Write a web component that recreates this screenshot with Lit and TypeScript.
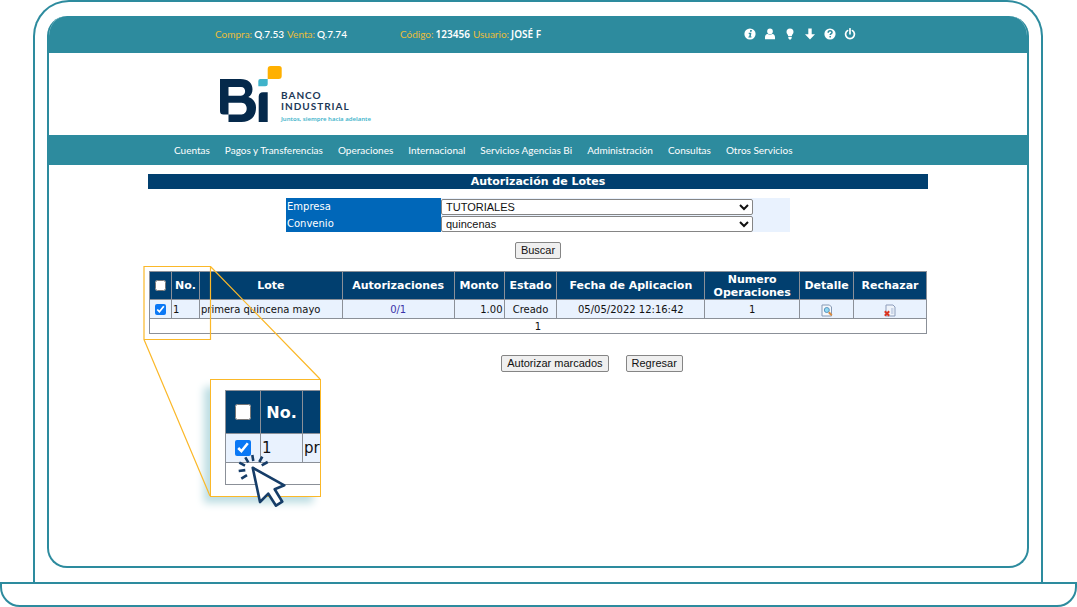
import { LitElement, html, svg, css } from "lit";
import { customElement, state } from "lit/decorators.js";

interface Column {
  title: string;
  width: number;
}

const COLUMNS: Column[] = [
  { title: "", width: 22 },
  { title: "No.", width: 28 },
  { title: "Lote", width: 143 },
  { title: "Autorizaciones", width: 112 },
  { title: "Monto", width: 50 },
  { title: "Estado", width: 53 },
  { title: "Fecha de Aplicacion", width: 148 },
  { title: "Numero Operaciones", width: 95 },
  { title: "Detalle", width: 54 },
  { title: "Rechazar", width: 73 },
];
const TOTAL = COLUMNS.reduce((sum, c) => sum + c.width, 0);

const MENU = [
  "Cuentas",
  "Pagos y Transferencias",
  "Operaciones",
  "Internacional",
  "Servicios Agencias Bi",
  "Administración",
  "Consultas",
  "Otros Servicios",
];

const TOOLS = [
  {
    label: "Información",
    shape: svg`<circle cx="6" cy="6" r="5.6" fill="#fff"/><path d="M6.2 2.1h1.7L7.6 3.7H5.9zM4.7 4.8h2.7L6.8 8.4h.8l-.2 1.2H4.3l.2-1.2h.7l.4-2.4h-.9z" fill="#2d8b9e"/>`,
  },
  {
    label: "Usuario",
    shape: svg`<circle cx="6" cy="3.4" r="2.8" fill="#fff"/><path d="M1 11.2V9.3C1 7.4 2 6.3 3.6 6.1c1.4 1 3.4 1 4.8 0C10 6.3 11 7.4 11 9.3v1.9z" fill="#fff"/>`,
  },
  {
    label: "Ideas",
    shape: svg`<path d="M6 .4a3.5 3.5 0 0 1 3.5 3.5c0 1.7-1.5 2.5-1.7 4.2H4.2C4 6.4 2.5 5.6 2.5 3.9A3.5 3.5 0 0 1 6 .4zM4.3 8.8h3.4V10l-.8 1.5H5.1L4.3 10z" fill="#fff"/>`,
  },
  {
    label: "Descargar",
    shape: svg`<path d="M4.3.5h3.4v5.7h3.3L6 11.6 1 6.2h3.3z" fill="#fff"/>`,
  },
  {
    label: "Ayuda",
    shape: svg`<circle cx="6" cy="6" r="5.6" fill="#fff"/><path d="M4.2 4.7C4.2 2.3 8 2.3 8 4.4 8 5.7 6.2 5.5 6.2 7.1M6.2 8v1.5" fill="none" stroke="#2d8b9e" stroke-width="1.5"/>`,
  },
  {
    label: "Salir",
    shape: svg`<path d="M3.5 2.6a4.4 4.4 0 1 0 5 0M6 .8v5" fill="none" stroke="#fff" stroke-width="1.7" stroke-linecap="round"/>`,
  },
];

@customElement("app-root")
export class AppRoot extends LitElement {
  @state() private checked = true;

  static styles = css`
    :host {
      display: flex;
      flex-direction: column;
      min-height: 100vh;
      background: #fff;
      color: #111;
      font-family: "DejaVu Sans", Verdana, sans-serif;
      font-size: 10px;
      --teal: #2d8b9e;
      --navy: #013f6f;
      --pale: #e9f2fe;
      --amber: #fbb829;
    }
    * {
      box-sizing: border-box;
    }
    .lid {
      flex: 1;
      display: flex;
      margin: 0 34px 0 33px;
      padding: 14px 12px;
      border: 2px solid var(--teal);
      border-bottom: 0;
      border-radius: 36px 36px 0 0;
    }
    .screen {
      flex: 1;
      min-width: 0;
      border: 2px solid var(--teal);
      border-top: 0;
      border-radius: 20px;
      overflow: hidden;
    }
    .base {
      height: 25px;
      border: 2px solid var(--teal);
      border-radius: 0 0 20px 20px;
    }
    .wrap {
      max-width: 780px;
      margin: 0 auto;
    }
    .topbar,
    .menu {
      background: var(--teal);
      color: #fff;
      font-family: Lato, "Open Sans", sans-serif;
    }
    .topbar .wrap {
      display: flex;
      align-items: center;
      height: 37px;
      padding: 0 72px 1px 67px;
    }
    .rates {
      width: 185px;
    }
    .facts {
      display: flex;
      gap: 2px;
      margin: 0;
    }
    .facts dt {
      color: #e9bd3a;
    }
    .facts dd {
      margin: 0 1px 0 0;
      font-weight: 600;
    }
    .user dd {
      font-family: "Noto Sans", "Open Sans", sans-serif;
    }
    .facts dt,
    .facts dd {
      line-height: 14px;
    }
    .tools {
      display: flex;
      gap: 8px;
      margin-left: auto;
    }
    .tool {
      width: 12px;
      height: 12px;
      padding: 0;
      border: 0;
      background: none;
    }
    .tool svg {
      display: block;
    }
    .brandbar .wrap {
      display: flex;
      height: 82px;
      padding: 12px 71px 0;
    }
    .logo {
      overflow: visible;
    }
    .wordmark {
      padding-top: 25px;
      font-family: Lato, sans-serif;
      font-size: 10px;
      font-weight: 700;
      line-height: 11px;
      letter-spacing: 1px;
      color: #1c3857;
    }
    .wordmark p {
      margin: 0;
    }
    .wordmark .slogan {
      padding-top: 2px;
      font-family: "Noto Sans", sans-serif;
      font-size: 6px;
      font-weight: 600;
      letter-spacing: 0;
      color: #42b4cb;
    }
    .menu .wrap {
      display: flex;
      align-items: center;
      gap: 15px;
      height: 30px;
      padding-left: 26px;
    }
    .menu a {
      color: #fff;
      text-decoration: none;
      white-space: nowrap;
    }
    .content {
      display: flex;
      flex-direction: column;
      padding-top: 9px;
    }
    h1 {
      margin: 0 0 9px;
      padding-top: 1px;
      background: var(--navy);
      color: #fff;
      font-size: 11px;
      line-height: 14px;
      text-align: center;
    }
    .filter {
      display: grid;
      grid-template-columns: 155px 313px 36px;
      align-self: center;
      background: linear-gradient(90deg, #0067b9 155px, var(--pale) 155px);
    }
    .filter label {
      grid-column: 1;
      padding: 1px 0 0 1px;
      color: #fff;
      line-height: 16px;
    }
    .filter select {
      grid-column: 2;
      height: 16px;
      margin: 1px 1px 0 0;
      padding: 0;
      border: 1px solid #858585;
      border-radius: 2px;
      background: #fff;
      color: #111;
      font: 11px "Liberation Sans", Arial, sans-serif;
    }
    .btn {
      height: 17px;
      padding: 0 5px;
      border: 1px solid #858585;
      border-radius: 2px;
      background: #efefef;
      color: #111;
      font: 11px/15px "Liberation Sans", Arial, sans-serif;
    }
    .search {
      align-self: center;
      margin: 10px 0 12px;
    }
    .actions {
      display: flex;
      justify-content: center;
      gap: 17px;
      margin-top: 21px;
      padding-left: 108px;
    }
    .batch {
      position: relative;
      padding: 0 1px;
    }
    table {
      width: 100%;
      table-layout: fixed;
      border-collapse: collapse;
    }
    th,
    td {
      padding: 0 1px;
      border: 1px solid #8b9098;
      text-align: center;
      white-space: nowrap;
    }
    th {
      background: var(--navy);
      color: #fff;
      font-size: 11px;
      line-height: 13px;
    }
    .batch th {
      height: 28px;
    }
    .batch .wide {
      white-space: normal;
    }
    .batch .row td {
      height: 19px;
      background: var(--pale);
    }
    .batch .pager td {
      height: 15px;
      line-height: 13px;
    }
    td.start {
      text-align: left;
    }
    td.end {
      text-align: right;
    }
    td a {
      color: #3a33a8;
      text-decoration: none;
    }
    input {
      display: block;
      width: 11px;
      height: 11px;
      margin: 0 auto;
      accent-color: #0a78f5;
    }
    .icon {
      display: block;
      width: 12px;
      height: 13px;
      margin: 2px auto 0;
      padding: 0;
      border: 0;
      background: none;
    }
    .guide {
      position: absolute;
      left: -6px;
      top: -6px;
      pointer-events: none;
    }
    .lens {
      position: absolute;
      left: 62px;
      top: 108px;
      width: 111px;
      height: 118px;
      padding: 10px 0 0 14px;
      border: 1px solid var(--amber);
      background: #fff;
      box-shadow: -7px 7px 8px -1px #bcdde2;
    }
    .crop {
      overflow: hidden;
    }
    .lens table {
      width: 160px;
    }
    .lens .mark {
      width: 35px;
    }
    .lens .num {
      width: 42px;
    }
    .lens th {
      height: 43px;
      font-size: 16px;
    }
    .lens td {
      font-size: 15px;
      text-align: left;
    }
    .lens .row td {
      height: 29px;
      background: var(--pale);
    }
    .lens .blank td {
      height: 22px;
    }
    .lens input {
      width: 16px;
      height: 16px;
    }
    .pointer {
      position: absolute;
      left: 89px;
      top: 180px;
      pointer-events: none;
    }
  `;

  private toggle(e: Event) {
    this.checked = (e.target as HTMLInputElement).checked;
  }

  private renderLens() {
    return html`
      <div class="lens" aria-hidden="true">
        <div class="crop">
          <table>
            <colgroup><col class="mark" /><col class="num" /><col /></colgroup>
            <tr>
              <th><input type="checkbox" tabindex="-1" aria-label="Todos" /></th>
              <th>No.</th>
              <th></th>
            </tr>
            <tr class="row">
              <td><input type="checkbox" tabindex="-1" aria-label="Lote 1" .checked=${this.checked} /></td>
              <td>1</td>
              <td>pr</td>
            </tr>
            <tr class="blank"><td colspan="3"></td></tr>
          </table>
        </div>
      </div>
      <svg class="pointer" width="50" height="58" viewBox="0 0 50 58" aria-hidden="true">
        <g fill="none" stroke="#163d68" stroke-width="2.6">
          <path d="M15.3 4l1 6M25.3 5.7l-3 5.3M30.7 11l-6 3.3M8.3 6.3l3 5M2.3 11.7l5.7 3M1.7 20l6.6-.9M4.3 27.7l5.7-3.5" />
          <path d="M15.7 16.7L47.3 34.3 37.7 38.3 45.3 50.7 39 54.7 31.3 42.7 23 51z" fill="#fff" stroke-linejoin="round" />
        </g>
      </svg>
    `;
  }

  render() {
    return html`
      <div class="lid">
        <div class="screen">
          <header>
            <div class="topbar">
              <div class="wrap">
                <dl class="facts rates">
                  <dt>Compra:</dt><dd>Q.7.53</dd>
                  <dt>Venta:</dt><dd>Q.7.74</dd>
                </dl>
                <dl class="facts user">
                  <dt>Código:</dt><dd>123456</dd>
                  <dt>Usuario:</dt><dd>JOSÉ F</dd>
                </dl>
                <div class="tools">
                  ${TOOLS.map(
                    (t) => html`<button class="tool" aria-label=${t.label}>
                      <svg width="12" height="12" viewBox="0 0 12 12">${t.shape}</svg>
                    </button>`
                  )}
                </div>
              </div>
            </div>
            <div class="brandbar">
              <div class="wrap">
                <svg class="logo" width="62" height="58" viewBox="0 0 62 58" role="img" aria-label="Bi">
                  <path
                    fill="#05294b"
                    fill-rule="evenodd"
                    d="M1 14h20.5c7.5 0 12 3.9 12 10.2 0 3.6-1.5 6.2-4.2 7.8 4.900 1.600 7.700 5.500 7.700 10.800C37 51.700 31.500 57 22.500 57H9.500v-7.500H4.500C2 49.500 1 48.500 1 46zM9.500 22v8.700h12.500c5.500 0 5.500-8.700 0-8.700zM9.500 37.800v11.700h13c7 0 7-11.700 0-11.700z"
                  />
                  <path d="M44 27.300H48.700V57H39.700V31.800Q39.700 27.300 44 27.300z" fill="#05294b" />
                  <path d="M41.300 14h7.400v4.700q0 2.500-2.500 2.500h-6.900V16q0-2 2-2z" fill="#3fb3ca" />
                  <path d="M51.700 1H60.200q2.500 0 2.500 2.500V11q0 3-3 3H48.700V4q0-3 3-3z" fill="#ffb000" />
                </svg>
                <div class="wordmark">
                  <p>BANCO</p>
                  <p>INDUSTRIAL</p>
                  <p class="slogan">Juntos, siempre hacia adelante</p>
                </div>
              </div>
            </div>
            <nav class="menu">
              <div class="wrap">${MENU.map((m) => html`<a href="#">${m}</a>`)}</div>
            </nav>
          </header>
          <main class="wrap content">
            <h1>Autorización de Lotes</h1>
            <div class="filter">
              <label for="empresa">Empresa</label>
              <select id="empresa"><option>TUTORIALES</option></select>
              <label for="convenio">Convenio</label>
              <select id="convenio"><option>quincenas</option></select>
            </div>
            <button class="btn search">Buscar</button>
            <div class="batch">
              <table>
                <colgroup>
                  ${COLUMNS.map((c) => html`<col style="width:${(c.width / TOTAL) * 100}%" />`)}
                </colgroup>
                <thead>
                  <tr>
                    ${COLUMNS.map((c) =>
                      c.title
                        ? html`<th class=${c.title.startsWith("Numero") ? "wide" : ""}>${c.title}</th>`
                        : html`<th><input type="checkbox" aria-label="Marcar todos" /></th>`
                    )}
                  </tr>
                </thead>
                <tbody>
                  <tr class="row">
                    <td>
                      <input type="checkbox" aria-label="Marcar lote 1" .checked=${this.checked} @change=${this.toggle} />
                    </td>
                    <td class="start">1</td>
                    <td class="start">primera quincena mayo</td>
                    <td><a href="#">0/1</a></td>
                    <td class="end">1.00</td>
                    <td>Creado</td>
                    <td>05/05/2022 12:16:42</td>
                    <td>1</td>
                    <td>
                      <button class="icon" aria-label="Detalle">
                        <svg width="12" height="13" viewBox="0 0 12 13">
                          <path d="M1 1h7.5l2 2v9H1z" fill="#f5f8fc" stroke="#8599b4" />
                          <circle cx="5.8" cy="6" r="2.5" fill="#8fdaf2" stroke="#5d93bd" />
                          <path d="M7.8 8.2l3 3.2" stroke="#d98b3e" stroke-width="2" />
                        </svg>
                      </button>
                    </td>
                    <td>
                      <button class="icon" aria-label="Rechazar">
                        <svg width="12" height="13" viewBox="0 0 12 13">
                          <path d="M2 1h7l2 2v9H2z" fill="#eef3fa" stroke="#8d9dbb" />
                          <path d="M7 5h2.5M7 7h2.5M7 9h2.5" stroke="#a9b9d6" />
                          <path d="M.8 7.3l4.4 4.4M5.2 7.3L.8 11.7" stroke="#dc3420" stroke-width="2" />
                        </svg>
                      </button>
                    </td>
                  </tr>
                  <tr class="pager"><td colspan="10">1</td></tr>
                </tbody>
              </table>
              ${this.renderLens()}
              <svg class="guide" width="180" height="234" viewBox="0 0 180 234" aria-hidden="true">
                <path
                  d="M2 1.5H68.5V74.5H2zM68.5 1.5L178 114M2 74.5L68 231"
                  fill="none"
                  stroke="#fbb829"
                  stroke-width="1.2"
                />
              </svg>
            </div>
            <div class="actions">
              <button class="btn">Autorizar marcados</button>
              <button class="btn">Regresar</button>
            </div>
          </main>
        </div>
      </div>
      <div class="base"></div>
    `;
  }
}
